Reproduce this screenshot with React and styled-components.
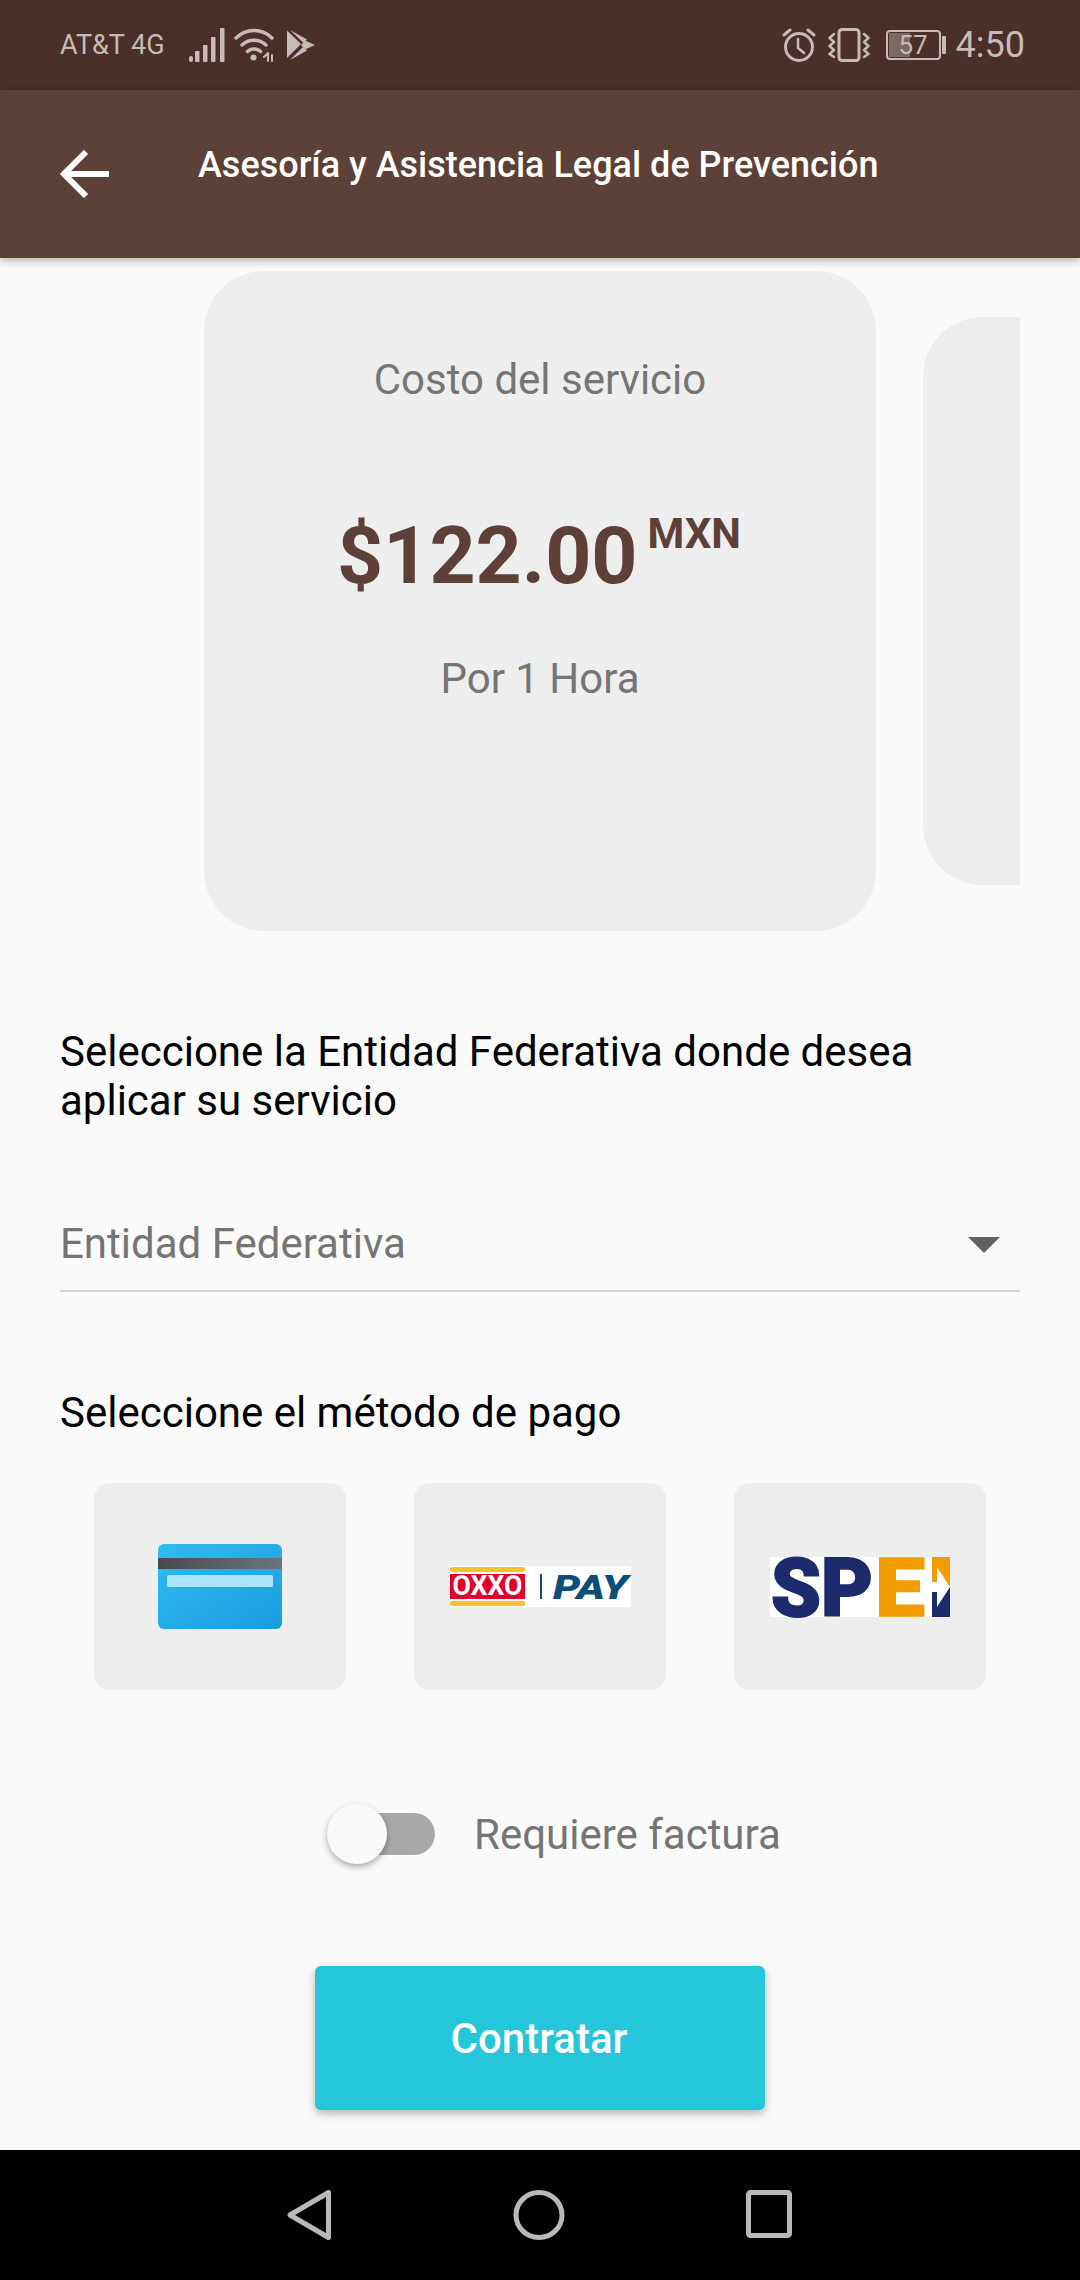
import React from 'react';
import styled, { createGlobalStyle } from 'styled-components';

const Global = createGlobalStyle`
  html, body { margin: 0; padding: 0; background: #fafafa; }
  body { font-family: Roboto, "Liberation Sans", sans-serif; }
`;

const Screen = styled.div`
  width: 1080px;
  height: 2280px;
  display: flex;
  flex-direction: column;
  background: #fafafa;
  overflow: hidden;
`;

const StatusBar = styled.div`
  height: 90px;
  flex: none;
  display: flex;
  align-items: center;
  justify-content: space-between;
  padding: 0 55px 0 60px;
  background: #4a2f2a;
  color: #c6bbb8;
`;
const StatusGroup = styled.div`
  display: flex;
  align-items: center;
`;
const Carrier = styled.span`
  font-size: 27px;
  line-height: 30px;
  margin-right: 24px;
`;
const Clock = styled.span`
  font-size: 36px;
  line-height: 40px;
  margin-left: 10px;
`;
const StatusIcon = styled.svg`
  display: block;
  flex: none;
  margin-right: ${p => p.$gap || 0}px;
`;

const AppBar = styled.header`
  height: 168px;
  flex: none;
  display: flex;
  align-items: flex-start;
  padding-left: 60px;
  background: #5d4037;
  box-shadow: 0 3px 8px rgba(0, 0, 0, 0.28);
  position: relative;
  z-index: 1;
`;
const BackIcon = styled.svg`
  display: block;
  margin-top: 60px;
  flex: none;
`;
const Title = styled.h1`
  margin: 50px 0 0 89px;
  font-size: 36px;
  line-height: 50px;
  font-weight: 500;
  color: #fff;
  white-space: nowrap;
`;

const Main = styled.main`
  flex: 1;
  display: flex;
  flex-direction: column;
  padding: 13px 60px 0;
`;

const Carousel = styled.div`
  display: flex;
  align-items: center;
  gap: 47px;
  padding-left: 144px;
  height: 660px;
  overflow: hidden;
`;
const Card = styled.div`
  flex: none;
  width: 672px;
  height: 660px;
  box-sizing: border-box;
  padding-top: 84px;
  display: flex;
  flex-direction: column;
  align-items: center;
  background: #eeeeee;
  border-radius: 60px;
`;
const NextCard = styled.div`
  flex: none;
  width: 672px;
  height: 568px;
  background: #eeeeee;
  border-radius: 60px;
`;
const CardLabel = styled.div`
  font-size: 42px;
  line-height: 50px;
  color: #757575;
  margin-top: ${p => p.$top || 0}px;
`;
const PriceRow = styled.div`
  display: flex;
  align-items: flex-start;
  gap: 10px;
  margin: 111px 2px 0 0;
  color: #5d4037;
  font-weight: 700;
`;
const Price = styled.span`
  font-size: 80.5px;
  line-height: 80px;
`;
const Currency = styled.span`
  font-size: 42px;
  line-height: 42px;
  margin-top: -3px;
`;

const Heading = styled.p`
  margin: ${p => p.$top}px 0 0;
  font-size: 42px;
  line-height: 49px;
  color: #000;
`;

const Dropdown = styled.div`
  margin-top: 94px;
  height: 71px;
  display: flex;
  align-items: flex-start;
  justify-content: space-between;
  border-bottom: 2px solid #d8d8d8;
`;
const Placeholder = styled.span`
  font-size: 42px;
  line-height: 50px;
  color: #757575;
`;
const Caret = styled.svg`
  display: block;
  margin: 18px 20px 0 0;
`;

const Methods = styled.div`
  margin-top: 46px;
  padding: 0 34px;
  display: flex;
  gap: 68px;
`;
const Method = styled.div`
  flex: none;
  width: 252px;
  height: 207px;
  display: flex;
  align-items: center;
  justify-content: center;
  background: #eeeeee;
  border-radius: 16px;
`;
const Logo = styled.svg`
  display: block;
  overflow: visible;
`;

const InvoiceRow = styled.div`
  margin: 114px 0 0 267px;
  display: flex;
  align-items: center;
  height: 60px;
`;
const Switch = styled.div`
  position: relative;
  flex: none;
  width: 108px;
  height: 60px;
  display: flex;
  align-items: center;
  justify-content: flex-end;
`;
const Track = styled.div`
  width: 84px;
  height: 42px;
  border-radius: 21px;
  background: #a8a8a8;
`;
const Thumb = styled.div`
  position: absolute;
  left: 0;
  top: 0;
  width: 60px;
  height: 60px;
  border-radius: 50%;
  background: #fafafa;
  box-shadow: 0 3px 6px rgba(0, 0, 0, 0.32);
`;
const InvoiceLabel = styled.span`
  margin: 1px 0 0 39px;
  font-size: 42px;
  line-height: 50px;
  color: #757575;
`;

const Hire = styled.button`
  align-self: center;
  margin-top: 102px;
  width: 450px;
  height: 144px;
  border: 0;
  padding: 0 2px 0 0;
  border-radius: 6px;
  background: #26c6da;
  color: #fff;
  font-family: inherit;
  font-size: 42px;
  font-weight: 500;
  box-shadow: 0 4px 8px rgba(0, 0, 0, 0.28);
`;

const NavBar = styled.nav`
  height: 130px;
  flex: none;
  box-sizing: border-box;
  padding: 40px 288px 0 287px;
  display: flex;
  align-items: flex-start;
  justify-content: space-between;
  background: #000;
`;
const NavIcon = styled.svg`
  display: block;
  fill: none;
  stroke: #b9b9b9;
  stroke-width: 5;
  stroke-linejoin: round;
`;

const Signal = () => (
  <StatusIcon width="36" height="36" viewBox="0 0 36 36" $gap={9} fill="currentColor">
    <rect x="0" y="29" width="4" height="6" rx="2" />
    <rect x="6" y="24" width="4.5" height="11" rx="1" />
    <rect x="14" y="18" width="4.5" height="17" rx="1" />
    <rect x="22" y="10" width="4.5" height="25" rx="1" />
    <rect x="31" y="1" width="4.5" height="34" rx="1" />
  </StatusIcon>
);

const Wifi = () => (
  <StatusIcon width="40" height="36" viewBox="0 0 40 36" $gap={12} fill="none" stroke="currentColor" strokeWidth="3.5" strokeLinecap="round">
    <path d="M2 11C12 1 28 1 38 11" />
    <path d="M8 18C14.5 11.5 25.5 11.5 32 18" />
    <path d="M13.5 24.5C17 21 23 21 26.5 24.5" />
    <circle cx="19.5" cy="30.5" r="3" fill="currentColor" stroke="none" />
    <path d="M34 26v8M30 30l4-4M38 34v-6" strokeWidth="2" />
  </StatusIcon>
);

const PlayStore = () => (
  <StatusIcon width="30" height="32" viewBox="0 0 30 32" fill="currentColor">
    <path d="M1 1.5L15 15 1 29z" />
    <path d="M4 1l13 12.5 4-3z" />
    <path d="M4 31l13-13 4 3.5z" />
    <path d="M19 11.5l10 4.5-10 4.5-4-4.5z" />
  </StatusIcon>
);

const Alarm = () => (
  <StatusIcon width="34" height="34" viewBox="0 0 34 34" $gap={12} fill="none" stroke="currentColor" strokeWidth="3" strokeLinecap="round">
    <circle cx="17" cy="19" r="13.5" />
    <path d="M16 11v9l6 5" strokeWidth="2.5" />
    <path d="M2 7l6-5M32 7l-6-5" />
  </StatusIcon>
);

const Vibrate = () => (
  <StatusIcon width="42" height="34" viewBox="0 0 42 34" $gap={16} fill="none" stroke="currentColor" strokeWidth="2.5" strokeLinecap="round" strokeLinejoin="round">
    <rect x="11" y="1.5" width="20" height="31" rx="3" strokeWidth="3" />
    <path d="M6 6L1.5 10 6 14 1.5 18 6 22 1.5 26 6 29" />
    <path d="M36 6L40.5 10 36 14 40.5 18 36 22 40.5 26 36 29" />
  </StatusIcon>
);

const Battery = () => (
  <StatusIcon width="60" height="30" viewBox="0 0 60 30" fill="none">
    <rect x="1" y="1" width="53" height="28" rx="3" stroke="currentColor" strokeWidth="2" />
    <rect x="3" y="3" width="21" height="24" fill="currentColor" opacity="0.4" />
    <rect x="56" y="6" width="4" height="18" rx="1" fill="currentColor" />
    <text x="27" y="24" textAnchor="middle" fontSize="26" fontFamily="Roboto, sans-serif" fill="currentColor">57</text>
  </StatusIcon>
);

const BankCard = () => (
  <Logo width="124" height="85" viewBox="0 0 124 85">
    <defs>
      <linearGradient id="cardFill" x1="0" y1="0" x2="1" y2="1">
        <stop offset="0" stopColor="#31bcf0" />
        <stop offset="1" stopColor="#1a9ce0" />
      </linearGradient>
      <linearGradient id="cardStripe" x1="0" y1="0" x2="1" y2="0">
        <stop offset="0" stopColor="#474b50" />
        <stop offset="1" stopColor="#6b757d" />
      </linearGradient>
    </defs>
    <rect width="124" height="85" rx="6" fill="url(#cardFill)" />
    <rect y="14" width="124" height="11" fill="url(#cardStripe)" />
    <rect x="9" y="31" width="106" height="12" rx="1.5" fill="#a9e5ff" />
  </Logo>
);

const OxxoPay = () => (
  <Logo width="181" height="41" viewBox="0 0 181 41">
    <rect width="181" height="41" fill="#fff" />
    <rect x="0" y="1" width="75" height="5" rx="2" fill="#fbc02d" />
    <rect x="0" y="8" width="75" height="25" fill="#e2002b" />
    <rect x="0" y="35" width="75" height="5" rx="2" fill="#fbc02d" />
    <text x="37.5" y="29" textAnchor="middle" fontSize="28" fontWeight="700" fontFamily="Roboto, sans-serif" fill="#fff" textLength="70" lengthAdjust="spacingAndGlyphs">OXXO</text>
    <rect x="90" y="8" width="2" height="25" fill="#0b4f79" />
    <text x="103" y="33" fontSize="34" fontWeight="900" fontStyle="italic" fontFamily="Roboto, sans-serif" fill="#0b4f79" textLength="75" lengthAdjust="spacingAndGlyphs">PAY</text>
  </Logo>
);

const Spei = () => (
  <Logo width="180" height="60" viewBox="0 0 180 60">
    <rect width="180" height="60" fill="#fff" />
    <text x="1" y="59" fontSize="82" fontWeight="900" fontFamily="Roboto, sans-serif" fill="#1c2a6e" stroke="#1c2a6e" strokeWidth="2" textLength="102" lengthAdjust="spacingAndGlyphs">SP</text>
    <text x="105" y="59" fontSize="82" fontWeight="900" fontFamily="Roboto, sans-serif" fill="#f39c00" stroke="#f39c00" strokeWidth="1.5" textLength="50" lengthAdjust="spacingAndGlyphs">E</text>
    <path d="M162 0h18v60h-18z" fill="#1c2a6e" />
    <path d="M162 0h18v30h-18z" fill="#f39c00" />
    <path d="M162 25h5V10l13 20-13 20V35h-5z" fill="#fff" />
  </Logo>
);

export default function App() {
  return (
    <Screen>
      <Global />
      <StatusBar>
        <StatusGroup>
          <Carrier>AT&amp;T 4G</Carrier>
          <Signal />
          <Wifi />
          <PlayStore />
        </StatusGroup>
        <StatusGroup>
          <Alarm />
          <Vibrate />
          <Battery />
          <Clock>4:50</Clock>
        </StatusGroup>
      </StatusBar>
      <AppBar>
        <BackIcon width="49" height="48" viewBox="0 0 49 48" fill="none" stroke="#fff" strokeWidth="6">
          <path d="M49 24H5" />
          <path d="M26 2L4 24l22 22" />
        </BackIcon>
        <Title>Asesoría y Asistencia Legal de Prevención</Title>
      </AppBar>
      <Main>
        <Carousel>
          <Card>
            <CardLabel>Costo del servicio</CardLabel>
            <PriceRow>
              <Price>$122.00</Price>
              <Currency>MXN</Currency>
            </PriceRow>
            <CardLabel $top={58}>Por 1 Hora</CardLabel>
          </Card>
          <NextCard />
        </Carousel>
        <Heading $top={96}>
          Seleccione la Entidad Federativa donde desea<br />aplicar su servicio
        </Heading>
        <Dropdown>
          <Placeholder>Entidad Federativa</Placeholder>
          <Caret width="32" height="16" viewBox="0 0 32 16">
            <path d="M0 0h32L16 16z" fill="#616161" />
          </Caret>
        </Dropdown>
        <Heading $top={96}>Seleccione el método de pago</Heading>
        <Methods>
          <Method><BankCard /></Method>
          <Method><OxxoPay /></Method>
          <Method><Spei /></Method>
        </Methods>
        <InvoiceRow>
          <Switch>
            <Track />
            <Thumb />
          </Switch>
          <InvoiceLabel>Requiere factura</InvoiceLabel>
        </InvoiceRow>
        <Hire>Contratar</Hire>
      </Main>
      <NavBar>
        <NavIcon width="44" height="50" viewBox="0 0 44 50">
          <path d="M41.5 2.5L3 25l38.5 22.5z" />
        </NavIcon>
        <NavIcon width="52" height="50" viewBox="0 0 52 50">
          <ellipse cx="26" cy="25" rx="23" ry="22.5" />
        </NavIcon>
        <NavIcon width="46" height="48" viewBox="0 0 46 48">
          <rect x="2.5" y="2.5" width="41" height="43" rx="2" />
        </NavIcon>
      </NavBar>
    </Screen>
  );
}
